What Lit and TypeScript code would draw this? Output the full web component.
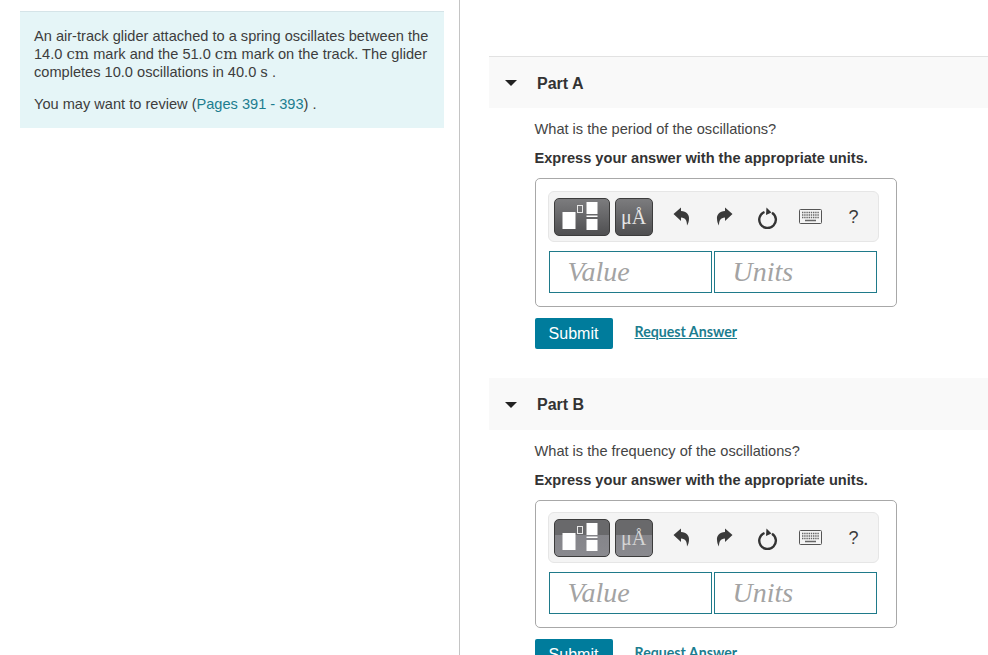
import { LitElement, html, css, svg } from 'lit';
import { customElement } from 'lit/decorators.js';

const PARTS = [
  { name: 'Part A', question: 'What is the period of the oscillations?', alt: false },
  { name: 'Part B', question: 'What is the frequency of the oscillations?', alt: true },
];

const undoPath = svg`<path d="M0.500 7 L8 0.500 V4 C13.500 4 16.500 8 16 12 C15.900 14.500 15.200 16.500 14 18.500 C14 13.500 12.500 10.800 8 10.500 V14 Z" fill="#3a3a3a"/>`;

@customElement('app-root')
export class AppRoot extends LitElement {
  static styles = css`
    :host {
      display: block;
      width: 988px;
      height: 655px;
      overflow: hidden;
      background: #fff;
      font-family: 'Liberation Sans', Arial, sans-serif;
      color: #3d3d3d;
    }
    .page {
      display: grid;
      grid-template-columns: 460px 1fr;
      height: 655px;
    }
    .left {
      border-right: 1px solid #c4c4c4;
      padding: 11px 15px 0 20px;
    }
    .intro {
      background: #e5f5f7;
      border-top: 1px solid #d5e4e8;
      padding: 15px 14px 14px 14px;
      font-size: 14.6px;
      line-height: 18px;
      height: 87px;
    }
    .intro p {
      margin: 0 0 14px;
    }
    .unit {
      font-family: 'DejaVu Serif', 'Liberation Serif', serif;
      font-size: 15px;
      line-height: 0;
    }
    .intro a {
      color: #1c7d8f;
      text-decoration: none;
    }
    .right {
      padding: 56px 0 0 29px;
    }
    .part {
      display: flex;
      flex-direction: column;
    }
    .head {
      box-sizing: border-box;
      display: flex;
      align-items: center;
      height: 52px;
      padding-top: 2px;
      background: #f9f9f9;
      border-top: 1px solid #e2e2e2;
      font-size: 16px;
      font-weight: 700;
      color: #333;
    }
    .part.alt .head {
      border-top-color: #f9f9f9;
      padding-top: 0;
    }
    .caret {
      width: 0;
      height: 0;
      margin-left: 16px;
      margin-right: 20px;
      margin-bottom: 2px;
      border-left: 6px solid transparent;
      border-right: 6px solid transparent;
      border-top: 6px solid #222;
    }
    .part.alt .caret {
      margin-bottom: 0;
    }
    .body {
      padding: 12px 0 29px 45.5px;
      font-size: 14.6px;
      line-height: 18px;
    }
    .q {
      margin: 0 0 11px;
      color: #444;
    }
    .hint {
      margin: 0 0 11px;
      font-weight: 700;
      color: #333;
    }
    .answer {
      box-sizing: border-box;
      width: 362px;
      height: 129px;
      border: 1px solid #a8a8a8;
      border-radius: 5px;
      padding: 12px 12px 0 12px;
      margin-bottom: 11px;
    }
    .part.alt .answer {
      height: 128px;
      padding-top: 11px;
    }
    .toolbar {
      box-sizing: border-box;
      display: flex;
      align-items: center;
      height: 51px;
      width: 331px;
      background: #f4f4f4;
      border: 1px solid #e6e6e6;
      border-radius: 6px;
      padding-left: 5px;
    }
    .tool {
      box-sizing: border-box;
      display: flex;
      align-items: center;
      justify-content: center;
      height: 38px;
      border: 1px solid #3c3c3c;
      border-radius: 5px;
      background: linear-gradient(#7c7c7e, #4f4f51);
      color: #e4e4e4;
    }
    .part.alt .tool {
      background: linear-gradient(#69696b 0, #69696b 42%, #85858a 43%, #8a8a8f 100%);
      color: #d4d4d4;
    }
    .tool.tpl {
      width: 56px;
      margin-right: 5px;
    }
    .tool.mu {
      width: 38px;
      font-family: 'Liberation Serif', serif;
      font-size: 20px;
    }
    .act {
      display: flex;
      align-items: center;
      justify-content: center;
      width: 24px;
      height: 24px;
      flex: none;
    }
    .undo {
      margin-left: 17px;
    }
    .redo,
    .reset,
    .keys,
    .help {
      margin-left: 19px;
    }
    .help {
      font-size: 18px;
      color: #3a3a3a;
    }
    .inputs {
      display: flex;
      gap: 2px;
      margin: 9px 0 0 1px;
      width: 328px;
    }
    .box {
      box-sizing: border-box;
      flex: 1;
      height: 42px;
      border: 1px solid #1f7a8a;
      padding-left: 18px;
      font-family: 'Liberation Serif', serif;
      font-style: italic;
      font-size: 28px;
      line-height: 40px;
      color: #a3a3a3;
    }
    .actions {
      display: flex;
      align-items: center;
    }
    .submit {
      width: 78px;
      height: 31px;
      border: 0;
      padding: 0;
      border-radius: 2px;
      background: #007c9c;
      color: #fff;
      font-family: inherit;
      font-size: 16px;
      margin-right: 22px;
    }
    .req {
      font-family: Lato, 'Liberation Sans', sans-serif;
      font-size: 14.2px;
      font-weight: 700;
      color: #1c7d8f;
      text-decoration: underline;
      margin: 0 0 4px 0;
    }
  `;

  renderToolbar() {
    return html`
      <div class="toolbar">
        <div class="tool tpl">
          <svg width="48" height="34" viewBox="0 0 48 34">
            <rect x="4.500" y="12" width="13" height="17" fill="#fff"/>
            <rect x="19.500" y="5.500" width="5" height="7" fill="none" stroke="#e8e8e8"/>
            <rect x="28.500" y="2" width="11" height="12" fill="#fff"/>
            <rect x="28.500" y="15.500" width="11" height="1.500" fill="#fff"/>
            <rect x="28.500" y="19" width="11" height="11" fill="#fff"/>
          </svg>
        </div>
        <div class="tool mu">μÅ</div>
        <div class="act undo">
          <svg width="17" height="19" viewBox="0 0 17 19">${undoPath}</svg>
        </div>
        <div class="act redo">
          <svg width="17" height="19" viewBox="0 0 17 19"><g transform="translate(17 0) scale(-1 1)">${undoPath}</g></svg>
        </div>
        <div class="act reset">
          <svg width="22" height="24" viewBox="0 0 22 24">
            <path d="M7.500 7 A8.300 8.300 0 1 0 15 7.700" fill="none" stroke="#333" stroke-width="2.400"/>
            <path d="M9.500 2.500 L14.500 7.500 L9 10 Z" fill="#333"/>
          </svg>
        </div>
        <div class="act keys">
          <svg width="23" height="15" viewBox="0 0 23 15">
            <rect x="0.500" y="0.500" width="22" height="14" rx="1" fill="#f4f4f4" stroke="#555"/>
            <path d="M3 3.500 H20 M3 6 H20 M3 8.500 H20" stroke="#666" stroke-width="1.400" stroke-dasharray="1.400 0.800"/>
            <path d="M6 11.500 H17" stroke="#666" stroke-width="1.500"/>
          </svg>
        </div>
        <div class="act help">?</div>
      </div>
    `;
  }

  render() {
    return html`
      <div class="page">
        <div class="left">
          <div class="intro">
            <p>An air-track glider attached to a spring oscillates between the
              14.0 <span class="unit">cm</span> mark and the 51.0 <span class="unit">cm</span> mark on the track. The glider
              completes 10.0 oscillations in 40.0 <span class="unit">s</span> .</p>
            <p>You may want to review (<a href="#">Pages 391 - 393</a>) .</p>
          </div>
        </div>
        <div class="right">
          ${PARTS.map(p => html`
            <section class="part ${p.alt ? 'alt' : ''}">
              <div class="head"><span class="caret"></span>${p.name}</div>
              <div class="body">
                <p class="q">${p.question}</p>
                <p class="hint">Express your answer with the appropriate units.</p>
                <div class="answer">
                  ${this.renderToolbar()}
                  <div class="inputs">
                    <div class="box">Value</div>
                    <div class="box">Units</div>
                  </div>
                </div>
                <div class="actions">
                  <button class="submit">Submit</button>
                  <a class="req" href="#">Request Answer</a>
                </div>
              </div>
            </section>
          `)}
        </div>
      </div>
    `;
  }
}
